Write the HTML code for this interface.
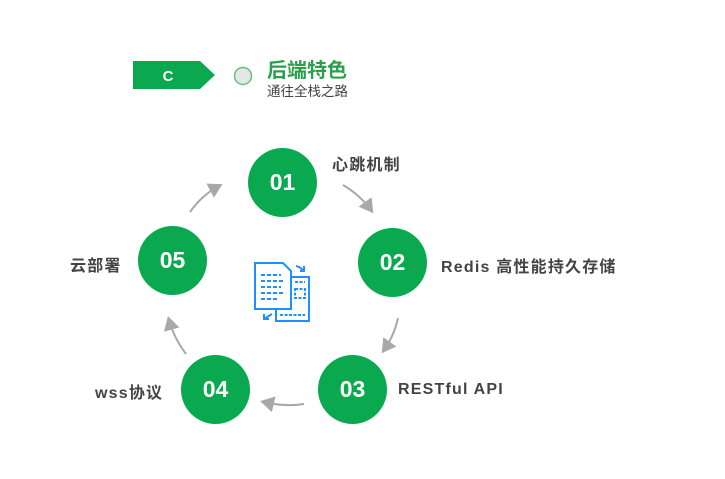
<!DOCTYPE html>
<html><head><meta charset="utf-8"><style>
body{margin:0;width:725px;height:479px;background:#fff;position:relative;overflow:hidden;font-family:"Liberation Sans","Noto Sans CJK SC",sans-serif}
.c{position:absolute;width:69px;height:69px;border-radius:50%;background:#0aa94f;color:#fff;font-weight:bold;font-size:23px;display:flex;align-items:center;justify-content:center}
.l{position:absolute;font-size:16px;letter-spacing:1.2px;font-weight:bold;color:#444;white-space:nowrap}
</style></head><body>
<svg width="725" height="479" style="position:absolute;left:0;top:0">
<polygon points="133,61 200,61 215,75 200,89 133,89" fill="#0aa94f"/>
<text x="168" y="81" fill="#fff" font-size="15" font-weight="bold" font-family="Liberation Sans" text-anchor="middle">C</text>
<circle cx="243" cy="76" r="8.5" fill="#e6e6e6" stroke="#5fc47f" stroke-width="1.5"/>
<defs><marker id="a" markerWidth="8" markerHeight="8" refX="5" refY="4" orient="auto"><path d="M0,0 L7,4 L0,8 z" fill="#a8a8a8"/></marker></defs>
<g fill="none" stroke="#a8a8a8" stroke-width="2" marker-end="url(#a)">
<path d="M343,185 Q360,195 371,210"/>
<path d="M398,318 Q394,336 384,350"/>
<path d="M304,404 Q285,407 264,402"/>
<path d="M186,354 Q174,338 169,320"/>
<path d="M190,212 Q202,195 219,186"/>
</g>
<g fill="none" stroke="#1e90ff" stroke-width="2">
<path d="M255,263 H283 L291,271 V309 H255 Z"/>
<path d="M291,277 H309 V321 H276 V309"/>
<path d="M261,275 h20 M261,281 h22 M261,287 h20 M261,293 h22 M261,299 h18" stroke-dasharray="4 2"/>
<path d="M295,282 h10 M295,289 h10 v9 h-10 z M280,315 h25" stroke-dasharray="3 1.5"/>
<path d="M296,266 q5,1 7,5 M304,266 v5 h-4"/>
<path d="M272,314 l-8,5 M264,314 v5 h5"/>
</g>
</svg>
<div style="position:absolute;left:267px;top:54px;font-size:20px;font-weight:bold;color:#2aa04a">后端特色</div>
<div style="position:absolute;left:267px;top:80px;font-size:13.5px;color:#444">通往全栈之路</div>
<div class="c" style="left:248px;top:148px">01</div>
<div class="c" style="left:358px;top:228px">02</div>
<div class="c" style="left:318px;top:355px">03</div>
<div class="c" style="left:181px;top:355px">04</div>
<div class="c" style="left:138px;top:226px">05</div>
<div class="l" style="left:332px;top:151px">心跳机制</div>
<div class="l" style="left:441px;top:253px">Redis 高性能持久存储</div>
<div class="l" style="left:398px;top:381px">RESTful API</div>
<div class="l" style="left:95px;top:379px">wss协议</div>
<div class="l" style="left:70px;top:252px">云部署</div>
</body></html>
